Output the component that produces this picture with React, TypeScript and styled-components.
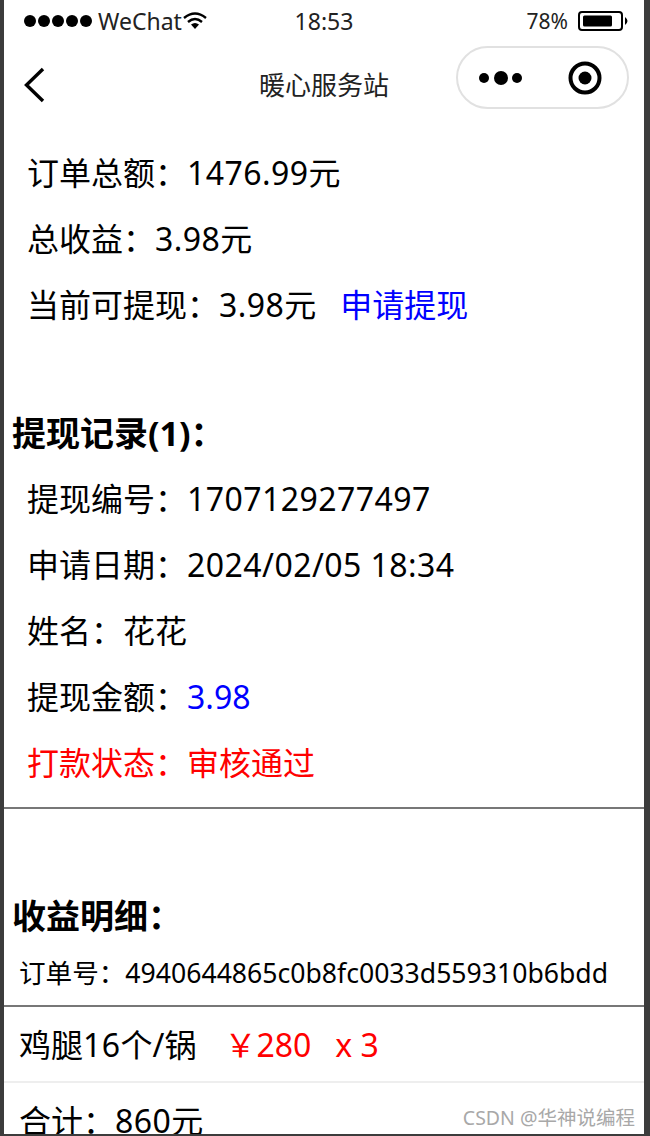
import styled, { createGlobalStyle } from "styled-components";

const GlobalStyle = createGlobalStyle`
  html, body {
    margin: 0;
    padding: 0;
    background: #3c3c3c;
  }
`;
const Frame = styled.div`
  width: 650px;
  height: 1136px;
  box-sizing: border-box;
  padding: 0 6px 2px 4px;
  overflow: hidden;
  position: relative;
  font-family: "Noto Sans", "Noto Sans CJK SC", sans-serif;
  color: #000;
`;
const Page = styled.div`
  height: 100%;
  background: #fff;
  overflow: hidden;
`;
const StatusBar = styled.div`
  height: 41px;
  display: grid;
  grid-template-columns: 1fr auto 1fr;
  align-items: center;
  padding: 0 14px;
  font-size: 23px;
  color: #222;
`;
const StatusLeft = styled.div`
  display: flex;
  align-items: center;
  padding-left: 6px;
`;
const Signal = styled.div`
  display: flex;
  gap: 2px;
  margin-right: 6px;
`;
const Dot = styled.span`
  width: 12px;
  height: 12px;
  border-radius: 50%;
  background: #000;
`;
const StatusRight = styled.div`
  display: flex;
  align-items: center;
  justify-content: flex-end;
  gap: 10px;
  font-size: 21px;
`;
const NavBar = styled.div`
  height: 73px;
  display: grid;
  grid-template-columns: 1fr auto 1fr;
  align-items: center;
  padding: 0 15px;
`;
const Back = styled.div`
  display: flex;
  margin: 14px 0 0 5px;
`;
const NavTitle = styled.div`
  font-size: 26px;
  color: #222;
  margin-top: 12px;
`;
const Capsule = styled.div`
  justify-self: end;
  width: 173px;
  height: 63px;
  box-sizing: border-box;
  border: 2px solid #e1e1e1;
  border-radius: 32px;
  display: flex;
  align-items: center;
  justify-content: space-between;
  padding: 0 25px 0 20px;
`;
const Row = styled.div<{ $color?: string }>`
  height: 66px;
  line-height: 66px;
  padding-left: 23px;
  font-size: 32px;
  white-space: nowrap;
  color: ${(props) => props.$color || "#000"};
`;
const Num = styled.span`
  letter-spacing: 0.45px;
`;
const Summary = styled.div`
  padding-top: 26px;
`;
const Blue = styled.span`
  color: #0000ff;
`;
const ApplyLink = styled(Blue)`
  margin-left: 24px;
`;
const Heading = styled.h2<{ $top: number }>`
  margin: ${(props) => props.$top}px 0 0;
  padding-left: 8px;
  height: 66px;
  line-height: 66px;
  font-size: 34px;
  font-weight: 700;
`;
const Divider = styled.div<{ $color: string; $top?: number }>`
  height: 2px;
  margin-top: ${(props) => props.$top || 0}px;
  background: ${(props) => props.$color};
`;
const OrderNo = styled.div`
  height: 56px;
  line-height: 48px;
  padding-left: 15px;
  font-size: 26.6px;
  white-space: nowrap;
`;
const GoodsRow = styled.div`
  height: 74px;
  line-height: 76px;
  padding-left: 15px;
  font-size: 32px;
  white-space: nowrap;
`;
const Price = styled.span`
  color: #ff0000;
  margin-left: 28px;
`;
const Qty = styled.span`
  color: #ff0000;
  margin-left: 24px;
`;
const Watermark = styled.div`
  position: absolute;
  right: 15px;
  bottom: 5px;
  font-size: 19.5px;
  color: #a8a8a8;
`;

function App() {
  return (
    <Frame>
      <GlobalStyle />
      <Page>
        <StatusBar>
          <StatusLeft>
            <Signal>
              {[0, 1, 2, 3, 4].map((i) => (
                <Dot key={i} />
              ))}
            </Signal>
            WeChat
            <svg width="24" height="18" viewBox="0 0 24 18" style={{ marginLeft: 1 }}>
              <path d="M1 6 Q12 -3 23 6" fill="none" stroke="#000" strokeWidth="2.4" />
              <path d="M5 10 Q12 4 19 10" fill="none" stroke="#000" strokeWidth="2.4" />
              <path d="M8 12.5 Q12 9.5 16 12.5 L12 17Z" fill="#000" />
            </svg>
          </StatusLeft>
          <div>18:53</div>
          <StatusRight>
            78%
            <svg width="52" height="20" viewBox="0 0 52 20">
              <rect x="1" y="1" width="43" height="18" rx="3" fill="none" stroke="#000" strokeWidth="2" />
              <rect x="5" y="4.5" width="29" height="11" rx="1.5" fill="#000" />
              <path d="M47 6 Q52 10 47 14Z" fill="#000" />
            </svg>
          </StatusRight>
        </StatusBar>
        <NavBar>
          <Back>
            <svg width="24" height="36" viewBox="0 0 24 36">
              <path d="M19 2 L2.5 18 L19 34" fill="none" stroke="#000" strokeWidth="3.4" />
            </svg>
          </Back>
          <NavTitle>暖心服务站</NavTitle>
          <Capsule>
            <svg width="46" height="20" viewBox="0 0 46 20">
              <circle cx="6" cy="10" r="5" fill="#000" />
              <circle cx="23" cy="10" r="7" fill="#000" />
              <circle cx="39" cy="10" r="5" fill="#000" />
            </svg>
            <svg width="34" height="34" viewBox="0 0 34 34">
              <circle cx="17" cy="17" r="14.5" fill="none" stroke="#000" strokeWidth="4" />
              <circle cx="17" cy="17" r="6.5" fill="#000" />
            </svg>
          </Capsule>
        </NavBar>
        <Summary>
          <Row>
            订单总额：<Num>1476.99</Num>元
          </Row>
          <Row>
            总收益：<Num>3.98</Num>元
          </Row>
          <Row>
            当前可提现：<Num>3.98</Num>元<ApplyLink>申请提现</ApplyLink>
          </Row>
        </Summary>
        <Heading $top={62}>提现记录(1)：</Heading>
        <Row>
          提现编号：<Num>1707129277497</Num>
        </Row>
        <Row>
          申请日期：<Num>2024/02/05 18:34</Num>
        </Row>
        <Row>姓名：花花</Row>
        <Row>
          提现金额：<Blue>3.98</Blue>
        </Row>
        <Row $color="#ff0000">打款状态：审核通过</Row>
        <Divider $color="#777" $top={11} />
        <Heading $top={74}>收益明细：</Heading>
        <OrderNo>订单号：4940644865c0b8fc0033d559310b6bdd</OrderNo>
        <Divider $color="#777" />
        <GoodsRow>
          鸡腿<Num>16</Num>个/锅<Price>￥280</Price>
          <Qty>x 3</Qty>
        </GoodsRow>
        <Divider $color="#eee" />
        <GoodsRow>
          合计：<Num>860</Num>元
        </GoodsRow>
      </Page>
      <Watermark>CSDN @华神说编程</Watermark>
    </Frame>
  );
}
export default App;
